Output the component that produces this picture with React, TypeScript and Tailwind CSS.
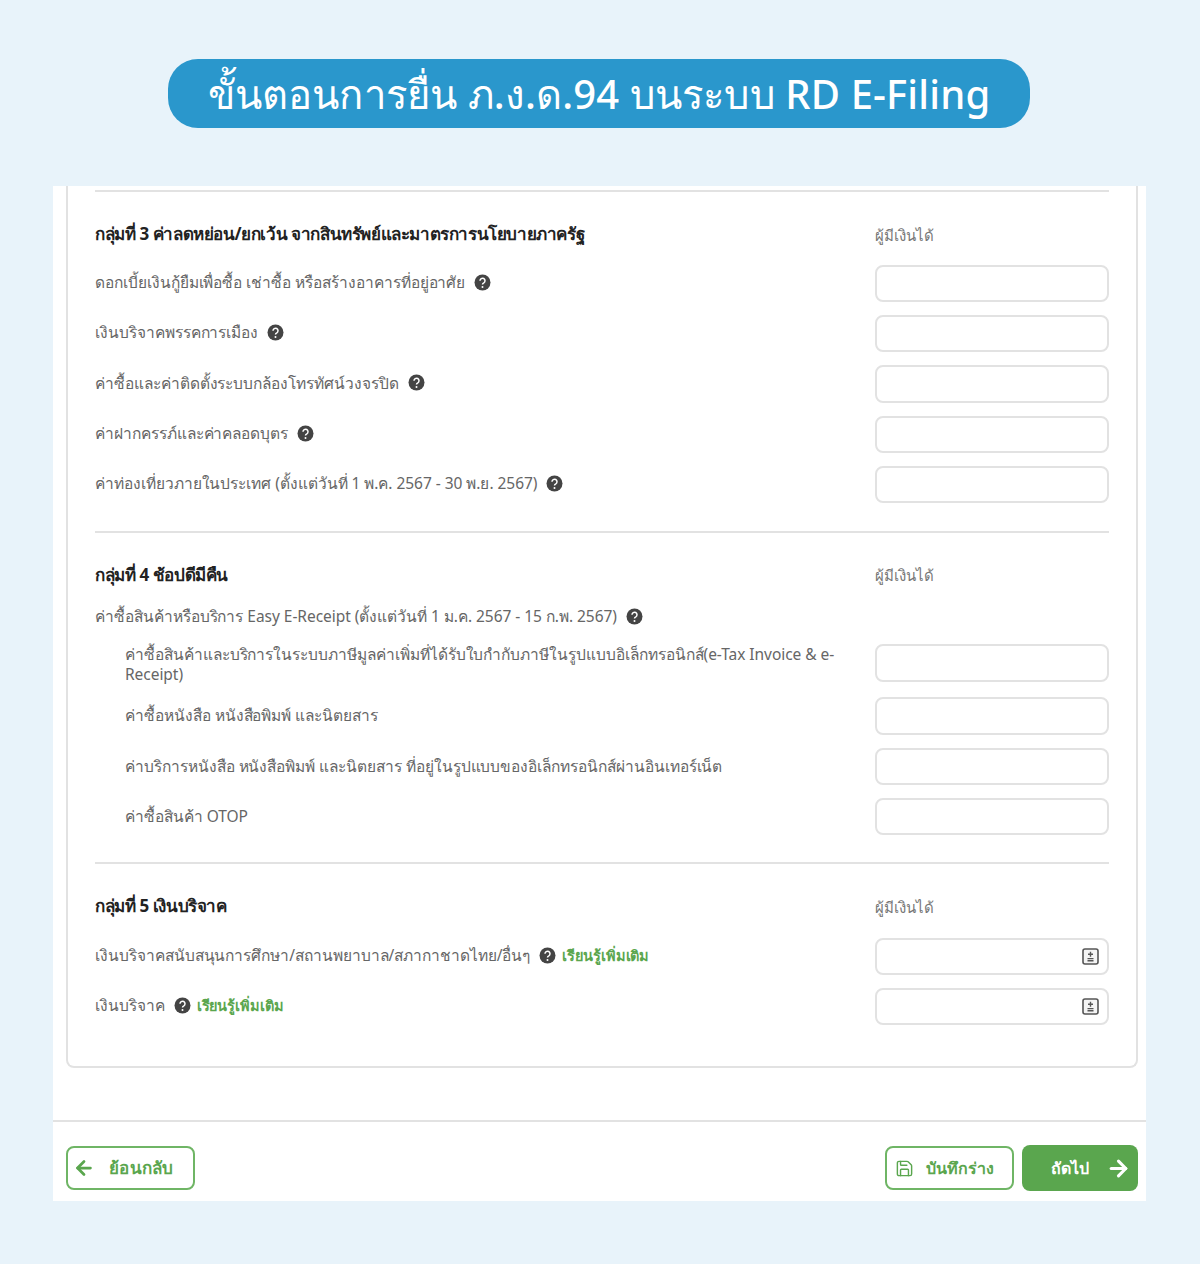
import { ArrowLeft, ArrowRight, Save } from "lucide-react";

const HelpIcon = () => (
  <svg className="w-[17px] h-[17px] shrink-0" viewBox="0 0 17 17">
    <circle cx="8.5" cy="8.5" r="8" fill="#444444" />
    <path
      d="M6 6.7a2.5 2.5 0 1 1 3.8 2.1c-.9.5-1.3 1-1.3 1.8"
      fill="none"
      stroke="#fff"
      strokeWidth="1.5"
    />
    <circle cx="8.5" cy="13" r="1" fill="#fff" />
  </svg>
);

const CalcIcon = () => (
  <svg className="w-[17px] h-[17px] shrink-0" viewBox="0 0 17 17">
    <rect x="1" y="1" width="15" height="15" rx="2" fill="#f4f4f4" stroke="#555" strokeWidth="1.6" />
    <path d="M8.5 3.8v5M6 6.3h5M5.5 10.6h6M5.5 12.8h6" stroke="#555" strokeWidth="1.4" />
  </svg>
);

const Field = ({ calc, className }: { calc?: boolean; className: string }) => (
  <div
    className={`w-[234px] shrink-0 rounded-lg border-2 border-[#e2e2e2] bg-white flex items-center justify-end pr-[8px] ${className}`}>
    {calc && <CalcIcon />}
  </div>
);

const LearnMore = () => (
  <span className="text-[14.5px] font-bold tracking-[-0.1px] text-[#5aa64e]">เรียนรู้เพิ่มเติม</span>
);

const GroupHead = ({ title, className }: { title: string; className: string }) => (
  <div className={`flex items-center justify-between ${className}`}>
    <div className="text-[17px] font-bold tracking-[-0.4px] text-[#222222] -translate-y-[1px]">{title}</div>
    <div className="w-[234px] text-[15px] text-[#777777]">ผู้มีเงินได้</div>
  </div>
);

const Row = ({
  label,
  help,
  learn,
  calc,
  indent,
  twoLines,
  h,
  mt,
}: {
  label: string;
  help?: boolean;
  learn?: boolean;
  calc?: boolean;
  indent?: boolean;
  twoLines?: boolean;
  h: string;
  mt: string;
}) => (
  <div className={`flex items-center justify-between ${mt}`}>
    <div
      className={`flex items-center text-[15.5px] leading-[20px] tracking-[-0.04px] text-[#666666] ${
        indent ? "pl-[30px] w-[755px]" : ""
      } ${twoLines ? "translate-y-[1px]" : "-translate-y-[1px]"}`}>
      <span>{label}</span>
      {help && (
        <span className="ml-[9px]">
          <HelpIcon />
        </span>
      )}
      {learn && (
        <span className="ml-[6px]">
          <LearnMore />
        </span>
      )}
    </div>
    <Field calc={calc} className={h} />
  </div>
);

export default function App() {
  return (
    <div
      className="w-[1200px] h-[1264px] bg-[#e8f3fa] pt-[59px] overflow-hidden"
      style={{ fontFamily: '"Noto Sans", "Liberation Sans", sans-serif' }}>
      <div className="ml-[168px] w-[862px] h-[69px] rounded-[30px] bg-[#2a97cc] flex items-center justify-center text-white text-[40px] tracking-[0.15px] font-medium">
        ขั้นตอนการยื่น ภ.ง.ด.94 บนระบบ RD E-Filing
      </div>

      <div className="mt-[58px] ml-[53px] w-[1093px] h-[1015px] bg-white flex flex-col">
        <div className="ml-[13px] mr-[8px] h-[882px] border-x-2 border-b-2 border-[#e2e2e2] rounded-b-lg pt-[4px] px-[27px]">
          <div className="h-[2px] bg-[#e2e2e2]" />

          <GroupHead title="กลุ่มที่ 3 ค่าลดหย่อน/ยกเว้น จากสินทรัพย์และมาตรการนโยบายภาครัฐ" className="mt-[30px]" />
          <Row mt="mt-[17px]" h="h-[37px]" help label="ดอกเบี้ยเงินกู้ยืมเพื่อซื้อ เช่าซื้อ หรือสร้างอาคารที่อยู่อาศัย" />
          <Row mt="mt-[13px]" h="h-[37px]" help label="เงินบริจาคพรรคการเมือง" />
          <Row mt="mt-[13px]" h="h-[38px]" help label="ค่าซื้อและค่าติดตั้งระบบกล้องโทรทัศน์วงจรปิด" />
          <Row mt="mt-[13px]" h="h-[37px]" help label="ค่าฝากครรภ์และค่าคลอดบุตร" />
          <Row mt="mt-[13px]" h="h-[37px]" help label="ค่าท่องเที่ยวภายในประเทศ (ตั้งแต่วันที่ 1 พ.ค. 2567 - 30 พ.ย. 2567)" />

          <div className="h-[2px] bg-[#e2e2e2] mt-[28px]" />

          <GroupHead title="กลุ่มที่ 4 ช้อปดีมีคืน" className="mt-[30px]" />
          <div className="mt-[18px] flex items-center text-[15.5px] leading-[20px] tracking-[-0.04px] text-[#666666]">
            <span>ค่าซื้อสินค้าหรือบริการ Easy E-Receipt (ตั้งแต่วันที่ 1 ม.ค. 2567 - 15 ก.พ. 2567)</span>
            <span className="ml-[9px]">
              <HelpIcon />
            </span>
          </div>
          <Row mt="mt-[17px]" h="h-[38px]" indent twoLines label="ค่าซื้อสินค้าและบริการในระบบภาษีมูลค่าเพิ่มที่ได้รับใบกำกับภาษีในรูปแบบอิเล็กทรอนิกส์(e-Tax Invoice & e-Receipt)" />
          <Row mt="mt-[14px]" h="h-[38px]" indent label="ค่าซื้อหนังสือ หนังสือพิมพ์ และนิตยสาร" />
          <Row mt="mt-[13px]" h="h-[37px]" indent label="ค่าบริการหนังสือ หนังสือพิมพ์ และนิตยสาร ที่อยู่ในรูปแบบของอิเล็กทรอนิกส์ผ่านอินเทอร์เน็ต" />
          <Row mt="mt-[13px]" h="h-[37px]" indent label="ค่าซื้อสินค้า OTOP" />

          <div className="h-[2px] bg-[#e2e2e2] mt-[27px]" />

          <GroupHead title="กลุ่มที่ 5 เงินบริจาค" className="mt-[30px]" />
          <Row mt="mt-[18px]" h="h-[37px]" help learn calc label="เงินบริจาคสนับสนุนการศึกษา/สถานพยาบาล/สภากาชาดไทย/อื่นๆ" />
          <Row mt="mt-[13px]" h="h-[37px]" help learn calc label="เงินบริจาค" />
        </div>

        <div className="mt-[52px] h-[2px] bg-[#e2e2e2]" />

        <div className="mt-[23px] ml-[13px] mr-[8px] flex items-center justify-between">
          <button className="w-[129px] h-[44px] rounded-lg border-2 border-[#6fb565] bg-white flex items-center pl-[5px] text-[#5aa64e] text-[17px] font-bold tracking-[0.3px]">
            <ArrowLeft className="w-[22px] h-[22px]" strokeWidth={3} />
            <span className="ml-[14px]">ย้อนกลับ</span>
          </button>
          <div className="flex items-center gap-[8px]">
            <button className="w-[129px] h-[44px] rounded-lg border-2 border-[#6fb565] bg-white flex items-center pl-[8px] text-[#5aa64e] text-[16px] font-bold">
              <Save className="w-[19px] h-[19px]" strokeWidth={1.8} />
              <span className="ml-[12px]">บันทึกร่าง</span>
            </button>
            <button className="w-[116px] h-[46px] rounded-lg bg-[#5aa64e] flex items-center pl-[29px] text-white text-[16px] font-bold">
              <span>ถัดไป</span>
              <ArrowRight className="w-[25px] h-[25px] ml-[17px]" strokeWidth={3} />
            </button>
          </div>
        </div>
      </div>
    </div>
  );
}
